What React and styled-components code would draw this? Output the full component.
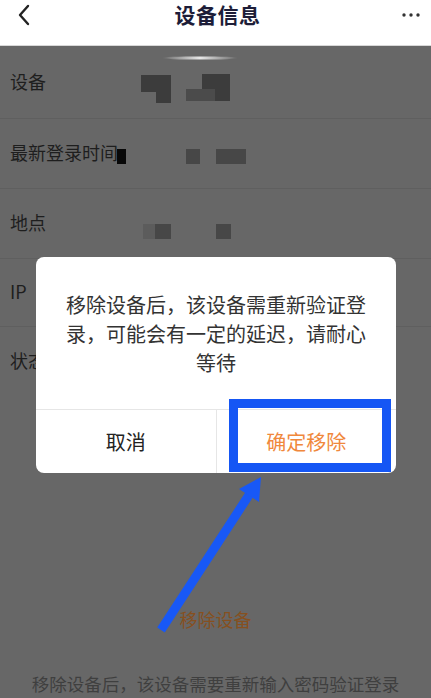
import React from 'react';
import styled, { createGlobalStyle } from 'styled-components';

const GlobalStyle = createGlobalStyle`
  html, body {
    margin: 0;
    padding: 0;
    background: #676767;
  }
  body {
    font-family: "Noto Sans CJK SC", "Noto Sans", sans-serif;
  }
`;

const Page = styled.div`
  position: relative;
  width: 431px;
  height: 698px;
  overflow: hidden;
  background: #676767;
`;

const NavBar = styled.div`
  height: 46px;
  background: #ffffff;
  border-bottom: 1px solid #d8d8d8;
  box-sizing: border-box;
  display: flex;
  align-items: flex-start;
  justify-content: space-between;
  padding: 0 8px 0 12px;
`;

const NavTitle = styled.div`
  font-size: 21px;
  line-height: 28px;
  font-weight: 700;
  color: #1d1d38;
  letter-spacing: 0.5px;
`;

const NavIcon = styled.div`
  width: 24px;
  height: 30px;
  display: flex;
  align-items: center;
  justify-content: center;
`;

const InfoList = styled.div`
  display: flex;
  flex-direction: column;
  padding-top: 1px;
`;

const Row = styled.div`
  height: ${p => p.$h || 70}px;
  display: flex;
  align-items: center;
  border-bottom: 1px solid ${p => (p.$last ? 'transparent' : '#5f5f5f')};
  box-sizing: border-box;
`;

const Label = styled.div`
  width: 100px;
  flex-shrink: 0;
  padding-left: 10px;
  padding-bottom: 4px;
  font-size: 18px;
  line-height: 18px;
  color: #1e1e1e;
  white-space: nowrap;
`;

const Mosaic = styled.svg`
  display: block;
  flex-shrink: 0;
`;

const Footer = styled.div`
  display: flex;
  flex-direction: column;
  align-items: center;
`;

const RemoveText = styled.div`
  margin-top: 210px;
  font-size: 18px;
  line-height: 24px;
  color: #86501f;
`;

const HintText = styled.div`
  margin-top: 41px;
  font-size: 17.5px;
  line-height: 24px;
  color: #3f3f3f;
  white-space: nowrap;
`;

const Dialog = styled.div`
  position: absolute;
  left: 36px;
  top: 257px;
  width: 360px;
  background: #ffffff;
  border-radius: 8px;
`;

const DialogBody = styled.div`
  padding: 33px 27px 32px;
  font-size: 20px;
  line-height: 29px;
  color: #333333;
  text-align: center;
`;

const DialogActions = styled.div`
  display: flex;
  height: 63px;
  border-top: 1px solid #e6e6e6;
`;

const ActionButton = styled.div`
  position: relative;
  flex: 1;
  display: flex;
  align-items: center;
  justify-content: center;
  font-size: 20px;
  color: ${p => (p.$primary ? '#f0883c' : '#222222')};
  & + & {
    border-left: 1px solid #e6e6e6;
  }
`;

const Highlight = styled.div`
  position: absolute;
  left: 12px;
  top: -11px;
  right: 5px;
  bottom: 1px;
  border: 9px solid #1556f4;
  pointer-events: none;
`;

const Annotation = styled.svg`
  position: absolute;
  left: 0;
  top: 0;
  pointer-events: none;
`;

const BackIcon = () => (
  <svg width="14" height="22" viewBox="0 0 14 22">
    <path d="M11 2 L3 11 L11 20" fill="none" stroke="#222" strokeWidth="2.4" strokeLinecap="round" strokeLinejoin="round" />
  </svg>
);

const MoreIcon = () => (
  <svg width="20" height="6" viewBox="0 0 20 6">
    <circle cx="3" cy="3" r="1.7" fill="#333" />
    <circle cx="10" cy="3" r="1.7" fill="#333" />
    <circle cx="17" cy="3" r="1.7" fill="#333" />
  </svg>
);

const rows = [
  {
    label: '设备',
    h: 72,
    blocks: [
      [31, 22, 30, 17, '#3c3c3c'],
      [46, 22, 15, 28, '#3c3c3c'],
      [76, 36, 29, 12, '#4b4b4b'],
      [92, 21, 28, 15, '#3c3c3c'],
      [105, 21, 15, 27, '#3c3c3c'],
    ],
    glow: true,
  },
  {
    label: '最新登录时间',
    blocks: [
      [7, 25, 9, 15, '#080808'],
      [76, 25, 14, 15, '#474747'],
      [106, 25, 30, 15, '#474747'],
    ],
  },
  {
    label: '地点',
    blocks: [
      [33, 30, 12, 15, '#5c5c5c'],
      [45, 30, 16, 15, '#474747'],
      [106, 30, 15, 15, '#474747'],
    ],
  },
  { label: 'IP', h: 68, blocks: [] },
  { label: '状态', blocks: [] },
];

export default function App() {
  return (
    <>
      <GlobalStyle />
      <Page>
        <NavBar>
          <NavIcon><BackIcon /></NavIcon>
          <NavTitle>设备信息</NavTitle>
          <NavIcon><MoreIcon /></NavIcon>
        </NavBar>

        <InfoList>
          {rows.map((r, idx) => (
            <Row key={r.label} $h={r.h} $last={idx === rows.length - 1}>
              <Label>{r.label}</Label>
              <Mosaic width="200" height="60" viewBox="0 0 200 60">
                <defs>
                  <linearGradient id={`glow${idx}`} x1="0" x2="1" y1="0" y2="0">
                    <stop offset="0" stopColor="#fff" stopOpacity="0" />
                    <stop offset="0.5" stopColor="#fff" stopOpacity="0.85" />
                    <stop offset="1" stopColor="#fff" stopOpacity="0" />
                  </linearGradient>
                </defs>
                {r.glow && <ellipse cx="90" cy="5" rx="38" ry="1.6" fill={`url(#glow${idx})`} />}
                {r.blocks.map((b, i) => (
                  <rect key={i} x={b[0]} y={b[1]} width={b[2]} height={b[3]} fill={b[4]} />
                ))}
              </Mosaic>
            </Row>
          ))}
        </InfoList>

        <Footer>
          <RemoveText>移除设备</RemoveText>
          <HintText>移除设备后，该设备需要重新输入密码验证登录</HintText>
        </Footer>

        <Dialog>
          <DialogBody>移除设备后，该设备需重新验证登录，可能会有一定的延迟，请耐心等待</DialogBody>
          <DialogActions>
            <ActionButton>取消</ActionButton>
            <ActionButton $primary>
              确定移除
              <Highlight />
            </ActionButton>
          </DialogActions>
        </Dialog>

        <Annotation width="431" height="698" viewBox="0 0 431 698">
          <line x1="161" y1="630" x2="249" y2="495" stroke="#1858f6" strokeWidth="9" />
          <polygon points="261,477 259,502 239,489" fill="#1858f6" />
        </Annotation>
      </Page>
    </>
  );
}
